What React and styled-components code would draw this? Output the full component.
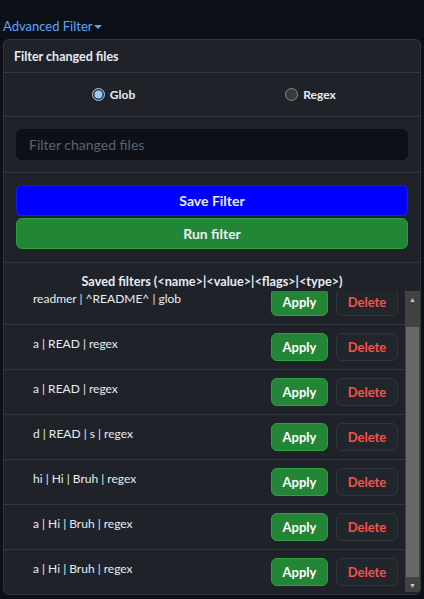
import React, { useEffect, useRef } from "react";
import styled, { createGlobalStyle } from "styled-components";

const GlobalStyle = createGlobalStyle`
  html, body {
    margin: 0;
    padding: 0;
    background: #0d1117;
    color: #e6edf3;
    font-family: Lato, "Noto Sans", "Liberation Sans", sans-serif;
  }
  * {
    box-sizing: border-box;
  }
`;

const filters = [
  "readmer | ^README^ | glob",
  "a | READ | regex",
  "a | READ | regex",
  "d | READ | s | regex",
  "hi | Hi | Bruh | regex",
  "a | Hi | Bruh | regex",
  "a | Hi | Bruh | regex",
];

const App = () => {
  const listRef = useRef(null);

  useEffect(() => {
    if (listRef.current) listRef.current.scrollTop = 11;
  }, []);

  return (
    <Page>
      <GlobalStyle />
      <Toggle>
        Advanced Filter<Caret />
      </Toggle>
      <Panel>
        <Header>Filter changed files</Header>
        <RadioRow>
          <RadioLabel>
            <input type="radio" name="kind" defaultChecked />
            Glob
          </RadioLabel>
          <RadioLabel>
            <input type="radio" name="kind" />
            Regex
          </RadioLabel>
        </RadioRow>
        <Section>
          <TextInput placeholder="Filter changed files" />
        </Section>
        <ButtonStack>
          <WideButton $variant="blue">Save Filter</WideButton>
          <WideButton $variant="green">Run filter</WideButton>
        </ButtonStack>
        <SavedTitle>
          Saved filters (&lt;name&gt;|&lt;value&gt;|&lt;flags&gt;|&lt;type&gt;)
        </SavedTitle>
        <ListArea>
          <List ref={listRef}>
            {filters.map((f, i) => (
              <Row key={i}>
                <RowLabel>{f}</RowLabel>
                <RowActions>
                  <ApplyButton>Apply</ApplyButton>
                  <DeleteButton>Delete</DeleteButton>
                </RowActions>
              </Row>
            ))}
          </List>
          <ScrollBar>
            <ScrollArrow>▲</ScrollArrow>
            <ScrollTrack>
              <ScrollThumb $offset={21} />
            </ScrollTrack>
            <ScrollArrow>▼</ScrollArrow>
          </ScrollBar>
        </ListArea>
      </Panel>
    </Page>
  );
};

export default App;

const Page = styled.div`
  padding: 15px 3px 0 3px;
  height: 599px;
  overflow: hidden;
`;

const Toggle = styled.div`
  display: inline-flex;
  align-items: center;
  color: #58a6ff;
  font-size: 13px;
  line-height: 20px;
  cursor: pointer;
`;

const Caret = styled.span`
  display: inline-block;
  width: 0;
  height: 0;
  margin-left: 1px;
  margin-top: 2px;
  border-left: 4px solid transparent;
  border-right: 4px solid transparent;
  border-top: 4px solid #58a6ff;
`;

const Panel = styled.div`
  margin-top: 3px;
  width: 418px;
  height: 556px;
  display: flex;
  flex-direction: column;
  background: #1f2329;
  border: 1px solid #30363d;
  border-radius: 6px;
  overflow: hidden;
`;

const Header = styled.div`
  padding: 0 10px;
  height: 33px;
  display: flex;
  align-items: center;
  font-size: 12.5px;
  font-weight: 700;
  border-bottom: 1px solid #30363d;
`;

const RadioRow = styled.div`
  display: flex;
  height: 44px;
  padding: 0 11px;
  align-items: center;
  border-bottom: 1px solid #30363d;
`;

const RadioLabel = styled.label`
  flex: 1;
  display: flex;
  justify-content: center;
  align-items: center;
  gap: 5px;
  font-size: 12px;
  font-weight: 700;
  color: #e6edf3;

  input {
    color-scheme: dark;
    margin: 0;
    width: 13px;
    height: 13px;
  }
`;

const Section = styled.div`
  padding: 12px 12px;
  border-bottom: 1px solid #30363d;
`;

const TextInput = styled.input`
  width: 100%;
  height: 31px;
  padding: 0 12px;
  background: #0d1117;
  border: 1px solid #0d1117;
  border-radius: 6px;
  color: #e6edf3;
  font-family: inherit;
  font-size: 14px;
  outline: none;

  &::placeholder {
    color: #5b636d;
  }
`;

const ButtonStack = styled.div`
  display: flex;
  flex-direction: column;
  gap: 2px;
  padding: 12px 12px 13px;
  border-bottom: 1px solid #30363d;
`;

const WideButton = styled.button`
  height: 31px;
  width: 100%;
  border-radius: 6px;
  border: 1px solid
    ${(p) => (p.$variant === "blue" ? "rgba(240,246,252,0.1)" : "#2ea043")};
  background: ${(p) => (p.$variant === "blue" ? "#0000ff" : "#238636")};
  color: #e6edf3;
  font-family: inherit;
  font-size: 14px;
  font-weight: 700;
  cursor: pointer;
`;

const SavedTitle = styled.div`
  height: 28px;
  display: flex;
  align-items: center;
  justify-content: center;
  padding-top: 7px;
  font-size: 12.7px;
  font-weight: 700;
`;

const ListArea = styled.div`
  flex: 1;
  min-height: 0;
  display: flex;
  padding-bottom: 2px;
`;

const List = styled.div`
  flex: 1;
  overflow: hidden;
`;

const Row = styled.div`
  height: 45px;
  display: flex;
  align-items: center;
  justify-content: space-between;
  padding: 0 7px 0 29px;
  border-bottom: 1px solid #30363d;
`;

const RowLabel = styled.span`
  font-size: 12px;
  margin-bottom: 8px;
  color: #e6edf3;
`;

const RowActions = styled.div`
  display: flex;
  gap: 8px;
  align-items: center;
`;

const ApplyButton = styled.button`
  width: 57px;
  height: 28px;
  border-radius: 6px;
  border: 1px solid #2ea043;
  background: #238636;
  color: #ffffff;
  font-family: inherit;
  font-size: 13px;
  font-weight: 700;
  cursor: pointer;
`;

const DeleteButton = styled.button`
  width: 62px;
  height: 28px;
  border-radius: 6px;
  border: 1px solid #30363d;
  background: #21262d;
  color: #f85149;
  font-family: inherit;
  font-size: 13px;
  font-weight: 700;
  cursor: pointer;
`;

const ScrollBar = styled.div`
  width: 15px;
  display: flex;
  flex-direction: column;
  background: #424242;
`;

const ScrollArrow = styled.div`
  height: 15px;
  display: flex;
  align-items: center;
  justify-content: center;
  font-size: 7px;
  color: #c8c8c8;
`;

const ScrollTrack = styled.div`
  flex: 1;
  display: flex;
  flex-direction: column;
  padding: 0 1px;
`;

const ScrollThumb = styled.div`
  margin-top: ${(p) => p.$offset}px;
  flex: 1;
  background: #686868;
`;
